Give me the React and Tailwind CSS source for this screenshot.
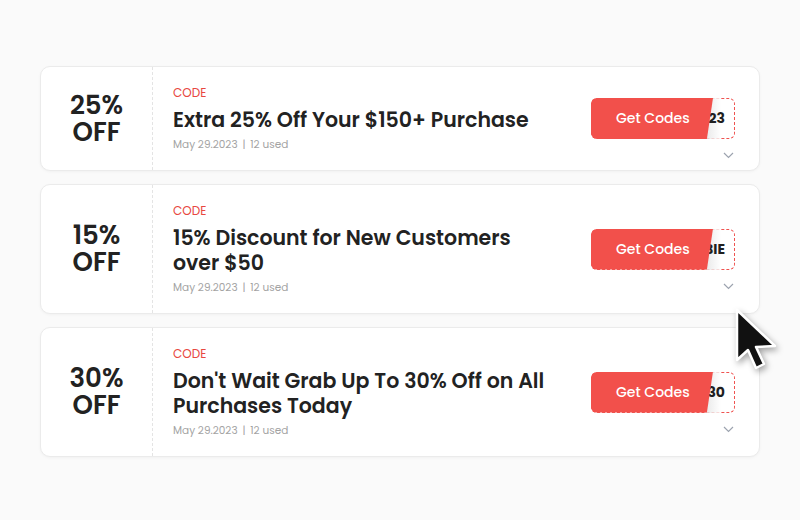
import React from 'react'

const coupons = [
  { pct: '25%', title: 'Extra 25% Off Your $150+ Purchase', code: '23' },
  { pct: '15%', title: '15% Discount for New Customers over $50', code: 'BIE' },
  { pct: '30%', title: "Don't Wait Grab Up To 30% Off on All Purchases Today", code: '30' },
]

function Chevron() {
  return (
    <svg width="11" height="7" viewBox="0 0 11 7" fill="none">
      <path d="M1 1l4.5 4.5L10 1" stroke="#9ca3af" strokeWidth="1.2" />
    </svg>
  )
}

function CodeButton({ code }) {
  return (
    <div className="relative w-[144px] h-[41px]">
      <div className="absolute inset-0 rounded-md border border-dashed border-[#ef5350] bg-white" />
      <div className="absolute left-[114px] top-0 h-full w-[16px] bg-gradient-to-r from-[#e2e2e2] to-white opacity-80" />
      <div className="absolute right-[10px] top-0 h-full flex items-center text-[14px] font-bold text-[#1f1f1f]">
        {code}
      </div>
      <div className="absolute left-0 top-0 h-full w-[122px] rounded-l-md bg-[#f2504b] [clip-path:polygon(0_0,100%_0,95%_100%,0_100%)] flex items-center pl-[25px] text-[14px] font-medium text-white">
        Get Codes
      </div>
    </div>
  )
}

function Cursor() {
  return (
    <svg className="absolute left-[734px] top-[307px] drop-shadow-[2px_3px_3px_rgba(0,0,0,0.35)]" width="46" height="66" viewBox="-3 -3 46 66">
      <path
        d="M0 0 L0 50 L11 40 L19 58 L27 54 L19 37 L38 36 Z"
        fill="#111"
        stroke="#fff"
        strokeWidth="2.5"
        strokeLinejoin="round"
      />
    </svg>
  )
}

export default function App() {
  return (
    <div className="relative w-[800px] h-[520px] bg-[#fafafa] pt-[66px] px-[40px] font-['Poppins','Inter',sans-serif]">
      <div className="flex flex-col gap-[13px]">
        {coupons.map((c, i) => (
          <div key={i} className="flex bg-white rounded-[10px] border border-[#ebebeb] shadow-[0_1px_3px_rgba(0,0,0,0.04)]">
            <div className="w-[112px] shrink-0 flex items-center justify-center border-r border-dashed border-[#e4e4e4]">
              <div className="w-[64px] text-center text-[26px] leading-[27px] font-semibold text-[#222]">{c.pct} OFF</div>
            </div>
            <div className="flex-1 flex items-center pl-[20px] pr-[24px] py-[18px]">
              <div className="flex-1">
                <div className="text-[12px] leading-[16px] text-[#e8483f]">CODE</div>
                <div className="mt-[6px] max-w-[372px] text-[20.5px] leading-[25px] font-semibold text-[#222]">{c.title}</div>
                <div className="mt-[6px] text-[10.5px] leading-[14px] text-[#a3a3a3]">May 29.2023 <span className="mx-[2px]">|</span> 12 used</div>
              </div>
              <div className="relative">
                <CodeButton code={c.code} />
                <div className="absolute right-[1px] top-[54px]">
                  <Chevron />
                </div>
              </div>
            </div>
          </div>
        ))}
      </div>
      <Cursor />
    </div>
  )
}
